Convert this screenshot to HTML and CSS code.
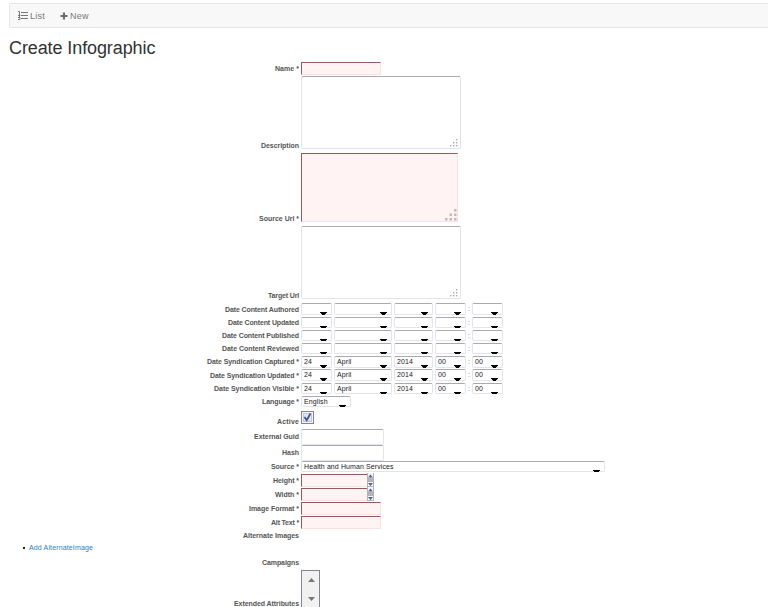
FILE: index.html
```html
<!DOCTYPE html>
<html lang="en">
<head>
<meta charset="utf-8">
<title>Create Infographic</title>
<link rel="stylesheet" href="styles.css">
</head>
<body>
<nav class="nav">
  <a class="nav-link"><svg width="10" height="9" viewBox="0 0 10 9"><path d="M3 1.5h7M3 4.5h7M3 7.5h7" stroke="#777"/><path d="M0 .5h1.5v2M0 4.5h2.5M0 6.5h2v2H0M1.5 2v5" fill="none" stroke="#777"/></svg><span>List</span></a>
  <a class="nav-link"><svg width="8" height="8" viewBox="0 0 8 8"><path d="M4 .5v7M.5 4h7" stroke="#6b6b6b" stroke-width="2"/></svg><span>New</span></a>
</nav>
<h1>Create Infographic</h1>
<form class="form" id="form"></form>
<script src="form.js"></script>
</body>
</html>
```
FILE: styles.css
```css
* { box-sizing: border-box; }
html { overflow: hidden; }
body { margin: 0; height: 607px; overflow: hidden; background: #fff; color: #333; font-family: "Liberation Sans", Arial, sans-serif; }
.nav { margin: 3px 0 0 9px; height: 25px; display: flex; align-items: center; padding-left: 8px; gap: 15px; background: #f8f8f8; border: 1px solid #e7e7e7; border-right: 0; border-radius: 2px 0 0 2px; }
.nav-link { display: flex; align-items: center; gap: 2px; font-size: 9px; line-height: 12px; color: #777; letter-spacing: .25px; }
.nav svg { display: block; }
h1 { margin: 9px 0 0 9px; height: 25px; font-size: 18px; line-height: 22px; font-weight: 400; letter-spacing: -.1px; color: #333; white-space: nowrap; }
.form { display: flow-root; }
.row { display: flex; align-items: center; gap: 2px; }
.row.low { align-items: flex-end; }
.row.low .label { margin-bottom: -1px; }
.row.low.check-row .label { margin-bottom: -2px; }
.row.low.last .label { margin-bottom: 0; line-height: 6px; }
.row.down .label { padding-top: 2px; }
.label { width: 299px; flex: none; display: flex; justify-content: flex-end; font-size: 7px; line-height: 8px; font-weight: 700; color: #555; white-space: nowrap; }
.box { position: relative; display: block; height: 100%; }
.control { display: block; width: 100%; height: 100%; margin: 0; padding: 0 2px; border: 1px solid #e1e4ed; border-top-color: #aaaab0; border-radius: 2px; background: #fff; color: #222; font: 7px/8px "Liberation Sans", Arial, sans-serif; letter-spacing: .1px; appearance: none; resize: none; outline: 0; }
.required .control { background: #fff3f3; border-color: #fde0e2; border-top-color: #915b5e; border-left-color: #915b5e; border-radius: 0; }
.grip { position: absolute; right: 3px; bottom: 2px; display: block; }
.required .grip { right: 1px; bottom: 1px; }
.arrow::after { content: ""; position: absolute; right: 5px; bottom: 0; width: 7px; height: 2px; background: #000; clip-path: polygon(0 0, 100% 0, 100% 50%, 86% 50%, 86% 100%, 14% 100%, 14% 50%, 0 50%); }
.arrow.tall::after { height: 3px; clip-path: polygon(0 0, 100% 0, 100% 34%, 86% 34%, 86% 67%, 72% 67%, 72% 100%, 28% 100%, 28% 67%, 14% 67%, 14% 34%, 0 34%); }
.colon { width: 2px; font-size: 7px; line-height: 8px; color: #777; }
.check { width: 13px; height: 13px; display: block; }
.spinner { position: absolute; left: 66px; top: -1px; display: block; }
.links { margin: 0; padding: 0 0 0 29px; list-style: none; height: 15px; }
.links li { display: flex; align-items: center; height: 12px; margin-left: -6px; gap: 4px; font-size: 7px; line-height: 8px; color: #2a80c4; }
.links li::before { content: ""; width: 2px; height: 2px; background: #222; }
.listbox { width: 19px; height: 100%; border: 1px solid #858591; border-bottom: 0; background: #f1f1f1; display: flex; flex-direction: column; align-items: center; padding: 7px 0 0 1px; gap: 15px; }
.listbox svg { display: block; flex: none; }
```
FILE: form.js
```js
const grip = big => {
  const size = big ? 12 : 8, dot = big ? 2.5 : 1.4, step = big ? 4.5 : 3;
  let dots = "";
  [[2, 0], [1, 1], [2, 1], [0, 2], [1, 2], [2, 2]].forEach(([x, y]) => {
    dots += `<rect x="${x * step}" y="${y * step}" width="${dot}" height="${dot}"/>`;
  });
  return `<svg class="grip" width="${size}" height="${size}" fill="${big ? "#c5b9b9" : "#aaa"}">${dots}</svg>`;
};
const box = (width, inner, cls = "") => `<span class="box ${cls}" style="width:${width}px">${inner}</span>`;
const input = (w, req) => box(w, `<input class="control">`, req ? "required" : "");
const area = (w, req) => box(w, `<textarea class="control"></textarea>${grip(req)}`, req ? "required" : "");
const select = (w, text = "", tall = false) => box(w, `<select class="control"><option>${text}</option></select>`, tall ? "arrow tall" : "arrow");
const date = (values, tall) => {
  const [d, m, y, h, n] = values;
  return select(31, d, tall) + select(58, m, tall) + select(39, y, tall) + select(31, h, tall) +
    `<span class="colon">:</span>` + select(31, n, tall);
};
const spin = box(80, `<input class="control" style="width:67px"><svg class="spinner" width="7" height="14"><path d="M0 0h7v14H0z" fill="#b3b3b6"/><path d="M1 0h5v5H1zM1 9h5v4H1z" fill="#f4f5fa"/><path d="M1 4.5L3.5 1.5 6 4.5zM1 10h5l-2.5 3z" fill="#4f5f9f"/></svg>`, "required");
const check = `<svg class="check" viewBox="0 0 13 13"><rect x=".5" y=".5" width="12" height="12" fill="#f4f4f4" stroke="#858585"/><rect x="2.5" y="2.5" width="8" height="8" fill="#e1e4ea" stroke="#c4c9d2"/><path d="M3.5 6l2.2 3.3L9.5 2.5" fill="none" stroke="#41569d" stroke-width="1.8"/></svg>`;
const listbox = `<span class="listbox"><svg width="7" height="4"><path d="M0 4l3.5-4L7 4z" fill="#777"/></svg><svg width="7" height="4"><path d="M0 0h7L3.5 4z" fill="#777"/></svg></span>`;
const blank = ["", "", "", "", ""];
const now = ["24", "April", "2014", "00", "00"];

// label, label width, height, space below, control, label alignment
const rows = [
  ["Name *", 24, 13, 1, input(80, true)],
  ["Description", 38, 73, 4, area(160), "low"],
  ["Source Url *", 40, 69, 4, area(157, true), "low"],
  ["Target Url", 31, 73, 4, area(160), "low"],
  ["Date Content Authored", 74, 12, 2, date(blank, true), "down"],
  ["Date Content Updated", 71, 11, 2, date(blank)],
  ["Date Content Published", 77, 11, 2, date(blank)],
  ["Date Content Reviewed", 77, 11, 2, date(blank)],
  ["Date Syndication Captured *", 92, 12, 1, date(now, true)],
  ["Date Syndication Updated *", 89, 12, 2, date(now, true), "down"],
  ["Date Syndication Visible *", 85, 11, 2, date(now)],
  ["Language *", 37, 11, 4, select(50, "English")],
  ["Active", 22, 13, 5, check, "low check-row"],
  ["External Guid", 45, 16, 0, input(83)],
  ["Hash", 17, 16, 0, input(83)],
  ["Source *", 28, 11, 2, select(304, "Health and Human Services")],
  ["Height *", 26, 13, 1, spin],
  ["Width *", 24, 13, 1, spin],
  ["Image Format *", 50, 13, 1, input(80, true)],
  ["Alt Text *", 28, 13, 1, input(80, true)],
  ["Alternate Images", 56, 12, 0, ""],
  null,
  ["Campaigns", 37, 11, 2, ""],
  ["Extended Attributes", 65, 37, 0, listbox, "low last"]
];
document.getElementById("form").innerHTML = rows.map(r => r
  ? `<div class="row ${r[5] || ""}" style="height:${r[2]}px;margin-bottom:${r[3]}px"><span class="label"><span data-width="${r[1]}">${r[0]}</span></span>${r[4]}</div>`
  : `<ul class="links"><li><span data-width="64">Add AlternateImage</span></li></ul>`).join("");

// Spread each label's letters to its column width
document.querySelectorAll("[data-width]").forEach(el => {
  const extra = el.dataset.width - el.getBoundingClientRect().width;
  const gap = extra / el.textContent.length;
  el.style.letterSpacing = gap + "px";
});
```
